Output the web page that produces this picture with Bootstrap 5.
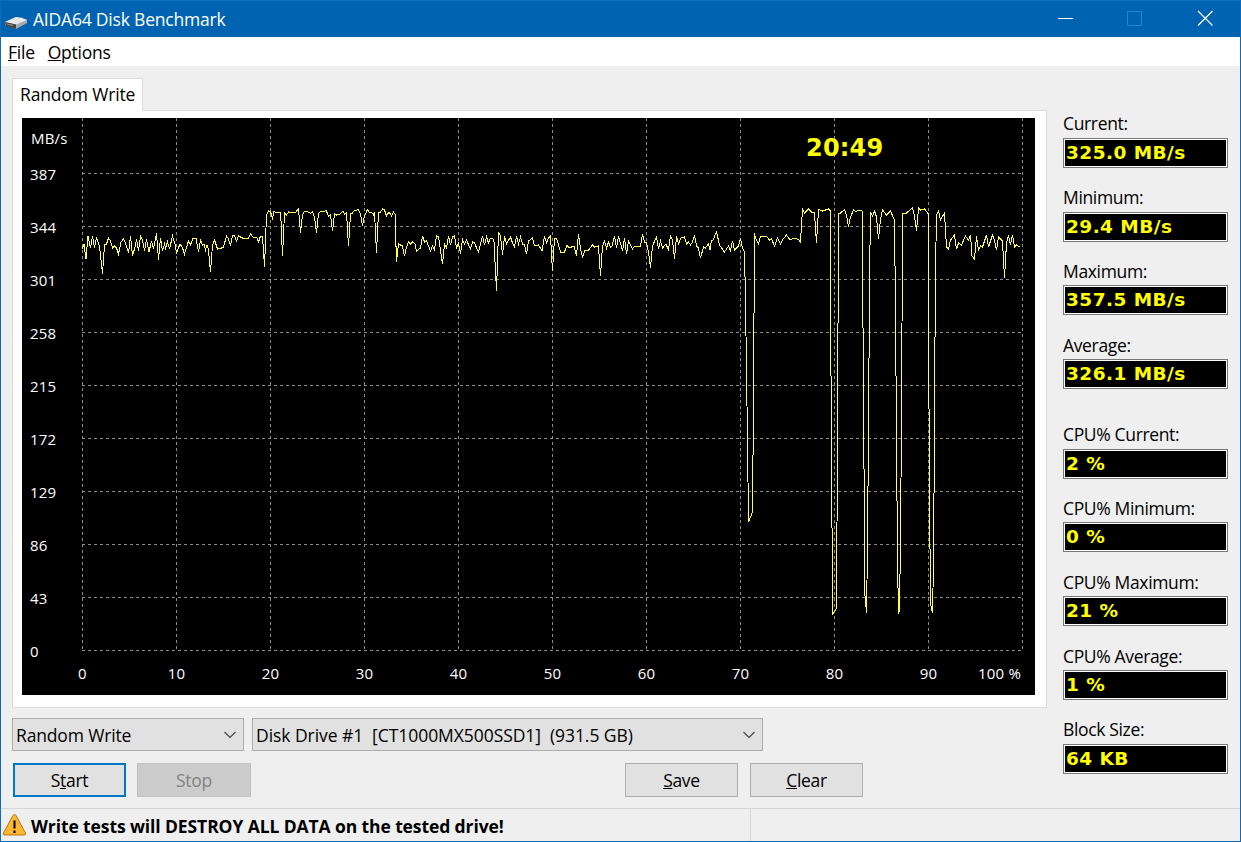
<!DOCTYPE html>
<html lang="en">
<head>
    <meta charset="UTF-8">
    <meta name="viewport" content="width=device-width, initial-scale=1.0">
    <title>AIDA64 Disk Benchmark</title>
    <link href="https://cdn.jsdelivr.net/npm/bootstrap@5.3.3/dist/css/bootstrap.min.css" rel="stylesheet">
    <style>
        body {
            font-family: "Open Sans", "Noto Sans", sans-serif;
            font-size: 17.5px;
            line-height: 24px;
            color: #000;
            background: #f0eff0;
        }
        .app-window {
            width: 1241px;
            height: 842px;
            border: 1px solid #0f6bb5;
            border-top-color: #0a6fc0;
        }
        .title-bar { height: 36px; background: #0063b1; color: #fff; }
        .title-text { letter-spacing: -.2px; }
        .menu-strip { height: 29px; padding-left: 7px; gap: 13px; background: #fff; }
        .menu-strip span { letter-spacing: -.25px; }
        .main-area { height: 742px; padding: 12px 12px 0 11px; }
        .left-side { width: 1035px; letter-spacing: -.15px; }
        .tab-label {
            width: 131px;
            height: 33px;
            margin-bottom: -1px;
            padding: 3px 0 0 7px;
            background: #fff;
            border: 1px solid #dcdcdc;
            border-bottom: 0;
        }
        .tab-panel {
            height: 598px;
            padding: 7px 0 0 9px;
            background: #fff;
            border: 1px solid #dcdcdc;
        }
        .chart-text { font-size: 15px; letter-spacing: .2px; fill: #fff; }
        .chart-clock { font: bold 24px "DejaVu Sans", sans-serif; letter-spacing: .2px; fill: #ff0; }
        .drop-row { margin-top: 10px; }
        .drop-box {
            height: 33px;
            padding: 0 7px 0 3px;
            background: #e1e1e1;
            border: 1px solid #adadad;
        }
        .drop-mode { width: 232px; }
        .drop-drive { width: 511px; letter-spacing: -.06px; }
        .button-row { margin-top: 12px; padding-left: 1px; }
        .push {
            width: 113px;
            height: 34px;
            background: #e1e1e1;
            border: 1px solid #adadad;
            letter-spacing: -.3px;
        }
        .push-default { border: 2px solid #0078c4; }
        .push-off { width: 114px; margin-left: 11px; background: #ccc; border-color: #bfbfbf; color: #838383; }
        .push-save { margin-left: 374px; }
        .push-clear { margin-left: 12px; }
        .readouts { width: 165px; padding-top: 32.8px; }
        .readout { height: 73.8px; }
        .readout-gap { margin-bottom: 15.6px; }
        .readout-label { height: 27px; padding-top: .6px; letter-spacing: -.35px; }
        .readout-box {
            height: 30px;
            padding: 0 2px;
            border: 1px solid #787878;
            background: #000;
            box-shadow: inset 0 0 0 1px #fff;
            color: #ff0;
            font: bold 18.5px/27px "DejaVu Sans", sans-serif;
            letter-spacing: .45px;
        }
        .status-bar { height: 33px; border-top: 1px solid #d7d7d7; }
        .status-message { width: 750px; border-right: 1px solid #d7d7d7; }
        .warn-text { padding: 2px 0 0 4px; letter-spacing: -.1px; }
    </style>
</head>
<body>
    <div class="app-window overflow-hidden">
        <!-- Title bar -->
        <div class="title-bar d-flex align-items-center">
            <svg class="ms-1 mt-1" width="24" height="18" viewBox="0 0 24 18">
                <path d="M0 10 11 5 22 8 22 11 11 17 0 13z" fill="#aaa"/>
                <path d="M0 10 11 5Q17 5 22 8L11 12.500z" fill="#e8e8e8"/>
                <path d="M0 10 11 12.500V17L1 14z" fill="#454545"/>
                <path d="M2 12 8 13.500" stroke="#999"/>
            </svg>
            <span class="title-text ms-1">AIDA64 Disk Benchmark</span>
            <svg class="ms-auto" width="184" height="36" viewBox="0 0 184 36" fill="none" stroke="#fff">
                <path d="M2 17.500H17"/>
                <rect x="71.500" y="10.500" width="14" height="14" stroke="#1e86d0"/>
                <path d="M142 10 156.500 24.500M156.500 10 142 24.500" stroke-width="1.200"/>
            </svg>
        </div>
        <!-- Menu -->
        <div class="menu-strip d-flex align-items-center">
            <span><u>F</u>ile</span>
            <span><u>O</u>ptions</span>
        </div>

        <div class="main-area d-flex justify-content-between">
            <div class="left-side">
                <div class="tab-label position-relative">Random Write</div>
                <div class="tab-panel">
                    <svg id="chart" class="d-block" width="1013" height="577" viewBox="22 118 1013 577">
                        <rect x="22" y="118" width="1013" height="577" fill="#000"/>
                        <g id="grid" stroke="#8c8c8c" stroke-dasharray="3 3" shape-rendering="crispEdges"></g>
                        <polyline id="trace" fill="none" stroke="#ffff50" stroke-width="1" shape-rendering="crispEdges"/>
                        <g id="axisLabels" class="chart-text">
                            <text x="31" y="144">MB/s</text>
                        </g>
                        <text class="chart-clock" x="806" y="156">20:49</text>
                    </svg>
                </div>
                <div class="drop-row d-flex gap-2">
                    <div class="drop-box drop-mode d-flex align-items-center justify-content-between">
                        <span>Random Write</span>
                        <svg width="12" height="8" viewBox="0 0 12 8" fill="none" stroke="#444" stroke-width="1.200"><path d="M.500 1 6 6.500 11.500 1"/></svg>
                    </div>
                    <div class="drop-box drop-drive d-flex align-items-center justify-content-between">
                        <span>Disk Drive #1&nbsp; [CT1000MX500SSD1]&nbsp; (931.5 GB)</span>
                        <svg width="12" height="8" viewBox="0 0 12 8" fill="none" stroke="#444" stroke-width="1.200"><path d="M.500 1 6 6.500 11.500 1"/></svg>
                    </div>
                </div>
                <div class="button-row d-flex">
                    <button class="push push-default p-0">S<u>t</u>art</button>
                    <button class="push push-off p-0" disabled>Stop</button>
                    <button class="push push-save p-0"><u>S</u>ave</button>
                    <button class="push push-clear p-0"><u>C</u>lear</button>
                </div>
            </div>

            <!-- Readings -->
            <div class="readouts">
                <div class="readout"><div class="readout-label">Current:</div><div class="readout-box">325.0 MB/s</div></div>
                <div class="readout"><div class="readout-label">Minimum:</div><div class="readout-box">29.4 MB/s</div></div>
                <div class="readout"><div class="readout-label">Maximum:</div><div class="readout-box">357.5 MB/s</div></div>
                <div class="readout readout-gap"><div class="readout-label">Average:</div><div class="readout-box">326.1 MB/s</div></div>
                <div class="readout"><div class="readout-label">CPU% Current:</div><div class="readout-box">2 %</div></div>
                <div class="readout"><div class="readout-label">CPU% Minimum:</div><div class="readout-box">0 %</div></div>
                <div class="readout"><div class="readout-label">CPU% Maximum:</div><div class="readout-box">21 %</div></div>
                <div class="readout"><div class="readout-label">CPU% Average:</div><div class="readout-box">1 %</div></div>
                <div class="readout"><div class="readout-label">Block Size:</div><div class="readout-box">64 KB</div></div>
            </div>
        </div>

        <!-- Status bar -->
        <div class="status-bar d-flex">
            <div class="status-message d-flex align-items-center fw-bold">
                <svg width="26" height="24" viewBox="0 0 26 24">
                    <path d="M13.500 1.500Q14.500 1.500 15.200 2.800L24.500 20Q25 22 23.500 22H3.500Q1.500 22 2.500 20L11.800 2.800Q12.500 1.500 13.500 1.500z" fill="#fdb62f" stroke="#b5761b"/>
                    <path d="M13.500 7.500V15.500M13.500 17.500V20" stroke="#000" stroke-width="2"/>
                </svg>
                <span class="warn-text">Write tests will DESTROY ALL DATA on the tested drive!</span>
            </div>
        </div>
    </div>

    <script src="https://cdn.jsdelivr.net/npm/bootstrap@5.3.3/dist/js/bootstrap.bundle.min.js"></script>
    <script>
        const svgNs = 'http://www.w3.org/2000/svg';

        // speed samples, x y pairs on the chart canvas
        const samples = `
82,249 84,244 86,259 88,236 90.5,248 92.5,236 94.5,248 96.5,238 99.5,246 102.5,274 104.5,245 106.5,244 108.5,238 110.5,241 112.5,248 114.5,246 116.5,248 118.5,254 121,242 123.5,239 125.5,243 128.5,253 130.5,236 132.5,256 135,247 136.5,239.5 138.5,251 140.5,236 142.5,240 144.5,251 146.5,239 149,252 151.5,241 153.5,249 156.5,233 158.5,260 160.5,238 162.5,251 164.5,244 165.5,248 167.5,242 169.5,249 172.5,236 175,244 176.5,253 180,244 182.5,248 184.5,254 188.5,241 190.5,245 193,238 196,238 198.5,252 200.5,240 202.5,245 204,244 205.5,250 207,245 208.5,250 210.5,272 212.5,245 214.5,240 217.5,249 221.5,248 223.5,247 226.5,236 228.5,239 230.5,246 232.5,235.5 234.5,235.5 236.5,241 238.5,236 244.5,239 248.5,238 250.5,234 253,237 256.5,237 258.5,242 260.5,236 262.5,236 264.5,267
266.5,215 268.5,211 270.5,212 272.5,218 274,211 276,213 280,212 280.7,213 282.5,256 284.5,213 286.5,215 288.5,212 295,213 298.5,209 300.5,233 302.5,215 304.5,211 306.5,211 310.5,213.5 312.5,212 314.5,217 316.5,233 318.5,213.5 321,211 324,212 326,210 328.5,216 330.5,215 332.5,231 334.5,214 336.5,215 340,214 343,211 344.5,214 346.5,213 348.5,246 350.5,214 352.5,213 354.5,210 357,210 358.5,209.5 360.5,214 362.5,226 364.5,216 367.5,209.5 369,212 371.5,212 373.5,215 374.5,212 376.5,253 378.5,212 380.5,212 382.5,209 384.5,210 386.5,216 389,212 391.5,216 393.5,212 395,214
396.5,262 398.5,244 402.5,246 404.5,256 406.5,247 408.5,242 410.5,244 412.5,242 415,244 416.5,251 420.5,248 422.5,236 424.5,242 426.5,241 430.5,251 432.5,246 434.5,250 436.5,236 438.5,237 440.5,250 442.5,264 444.5,244 446.5,248 448.5,236 450.5,245 452.5,237 454.5,236 456.5,248 458.5,243 460.5,254 462.5,239.5 464.5,244 466.5,240 470.5,249 472.5,242 474.5,243 478.5,252 482.5,236 484.5,245 486.5,237 488.5,243 490.5,238 492.5,238 494,242 496.5,291 498.5,232 500.5,236 502.5,255 504.5,236 506.5,244 510.5,237 512.5,243 514.5,247 516.5,236 518.5,244 520.5,237 522.5,244 524.5,245 526.5,254 528.5,241 532.5,238 534.5,246 538.5,245 542,251 544.5,236 546.5,243 548.5,238 550.5,236 552.5,271 554.5,238 556.5,238 560.5,252 564.5,252 567,245 569,248 574,246 576.5,256 578.5,234 580.5,249 582.5,257 585,250 588.5,250 592.5,245 594.5,247 598.5,246
600.5,276 602.5,246 604.5,241 606.5,248 608.5,242 610.5,247 612,246 614.5,236 616.5,248 618.5,236 622.5,251 624.5,238 626.5,254 628.5,241 632.5,249 634.5,246 640.5,246 642.5,234 644.5,242 646.5,243 648.5,252 650.5,268 652.5,246 656.5,237 658.5,249 660.5,241 662.5,248 666,244 668.5,250 670.5,236 672.5,240 674.5,259 676.5,236 678.5,244 681,238 684.5,237 686.5,244 688.5,242 690.5,245 692.5,242 694.5,235 696.5,246 698.5,248 700.5,258 703.5,247 705.5,248 708.5,244 710,250 711.5,240 713,240 716.5,232 719.5,245 721.5,248 724.5,252 728.5,246 730.5,251 732.5,241 734.5,250 738.5,246 740.5,238 742.5,248 744.5,252
745.5,300 747.5,440 748.5,522 750.5,517 752.5,512 753.5,400 754.5,233 755.5,238 758.5,244 760.5,236.5 766,236 769.5,240 771.5,239 774.5,246 777.5,238 780.5,244 783,239 786.5,235 790,240 794,238 798.5,239.5 800.5,242 802.5,208.5 804.5,213 808.5,209 811.5,212 814.5,213 816.5,243 818.5,209.5 822.5,211 828.5,209 830.5,211
830.5,310 831.5,440 832.5,614 835,611 836.5,608 837.5,440 838.5,213 840.5,213 844.5,209.5 846.5,215 848.5,227 850.5,217 853.5,210 856,212 858,210 861.5,210 862.5,212
863.5,440 864.5,496 865,596 866.5,613 867,581 868.5,440 869.5,280 870.5,212 872.5,216 874.5,211 876.5,217 878.5,239 880.5,219 882.5,210 886.5,215 890.5,211 894.5,220
895.5,310 896.5,440 897.5,560 898.5,614 899.7,610 900.6,510 901.5,440 902.5,214 906.5,213 912.5,208 914.5,216 916.5,231 918.5,208 920.5,210 924.5,209 928.5,214
928.5,310 929.5,507 930.7,605 932.5,613 933.3,573 934.5,440 935.3,280 936.5,215 938.5,211 940.5,220 944.5,213
946.5,247 948.5,249 950.5,240 954.5,235 956.5,249 958.5,243 961.5,245 965.5,236 968.5,240 970.5,235 972,256 974.5,259 976.5,236 978.5,250 980.5,246 982.5,247 986.5,235 988.5,247 992.5,235 994.5,240 996.5,250 998.5,237 1002.5,241 1004.5,278 1006.5,243 1008.5,235 1010.5,245 1012.5,235 1014.5,247 1016.5,245 1019.5,247`;

        function addLine(x1, y1, x2, y2) {
            const line = document.createElementNS(svgNs, 'line');
            line.setAttribute('x1', x1);
            line.setAttribute('y1', y1);
            line.setAttribute('x2', x2);
            line.setAttribute('y2', y2);
            document.getElementById('grid').appendChild(line);
        }

        function addLabel(x, y, value, anchor) {
            const text = document.createElementNS(svgNs, 'text');
            text.setAttribute('x', x);
            text.setAttribute('y', y);
            text.setAttribute('text-anchor', anchor);
            text.textContent = value;
            document.getElementById('axisLabels').appendChild(text);
        }

        for (let i = 0; i <= 10; i++) {
            const x = 82.5 + i * 94;
            addLine(x, 118, x, 651);
            if (i < 10) addLabel(x, 679, i * 10, 'middle');
        }
        addLabel(1021, 679, '100 %', 'end');

        for (let i = 0; i <= 9; i++) {
            const y = 173.5 + i * 53;
            addLine(82, y, 1023, y);
            addLabel(30, y + 6, 387 - i * 43, 'start');
        }

        document.getElementById('trace').setAttribute('points', samples.trim());
    </script>
</body>
</html>
